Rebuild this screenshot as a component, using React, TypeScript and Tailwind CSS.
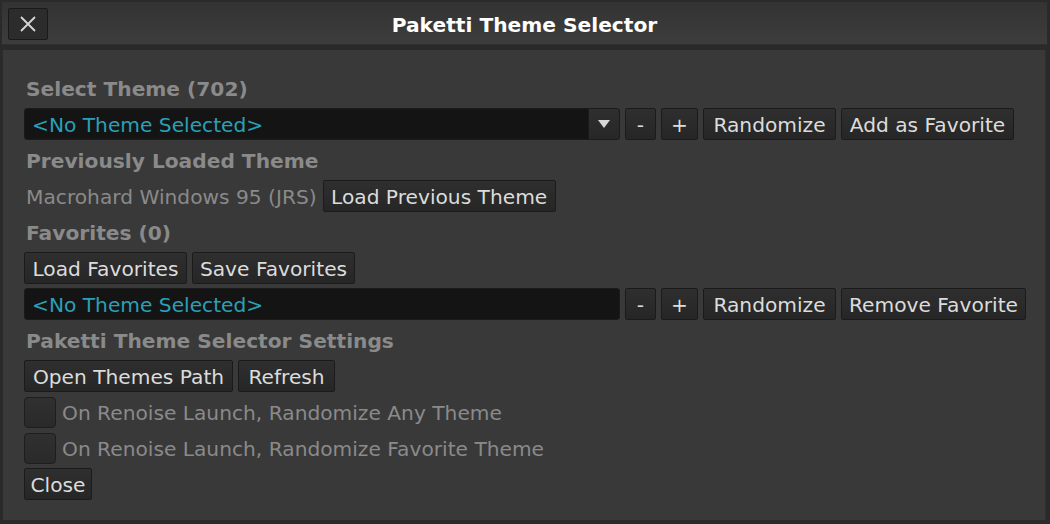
import React from "react";

const font = { fontFamily: '"DejaVu Sans", "Liberation Sans", sans-serif' };

function Btn({ label, w }: { label: string; w: string }) {
  return (
    <button
      className={`${w} h-8 shrink-0 rounded-[2px] border border-[#1b1b1b] bg-gradient-to-b from-[#2f2f2f] to-[#262626] pt-[2px] text-[20.2px] leading-none text-[#dcdcdc] flex items-center justify-center`}
    >
      {label}
    </button>
  );
}

function Heading({ text }: { text: string }) {
  return (
    <div className="h-8 flex items-center pt-[2px] pl-[2px] text-[20.2px] font-bold text-[#8a8a8a]">
      {text}
    </div>
  );
}

function Dropdown({ arrow }: { arrow?: boolean }) {
  return (
    <div className="w-[596px] h-8 shrink-0 rounded-[3px] border border-[#1b1b1b] bg-[#141414] flex items-center overflow-hidden">
      <span className="flex-1 pl-[7px] pt-[2px] text-[20.2px] text-[#2aa0b6]">&lt;No Theme Selected&gt;</span>
      {arrow && (
        <span className="w-[31px] h-full bg-gradient-to-b from-[#2f2f2f] to-[#272727] border-l border-[#1b1b1b] flex items-center justify-center">
          <svg width="14" height="10" viewBox="0 0 14 10">
            <path d="M1 1 L13 1 L7 9 Z" fill="#d8d8d8" />
          </svg>
        </span>
      )}
    </div>
  );
}

function Check({ label }: { label: string }) {
  return (
    <div className="h-8 flex items-center gap-[6px]">
      <span className="w-8 h-[31px] rounded-[4px] border border-[#1e1e1e] bg-gradient-to-b from-[#303030] to-[#2a2a2a]" />
      <span className="pt-[2px] text-[20.2px] text-[#8a8a8a]">{label}</span>
    </div>
  );
}

export default function App() {
  return (
    <div style={font} className="w-[1050px] h-[524px] bg-[#2a2a2a] p-[2px] flex flex-col overflow-hidden">
      <div className="h-[43px] shrink-0 bg-gradient-to-b from-[#333333] to-[#3d3d3d] border-b border-[#2f2f2f] mr-px relative flex items-center justify-center">
        <button className="absolute left-[6px] top-[6px] w-[40px] h-[32px] rounded-[2px] border border-[#1a1a1a] bg-[#2c2c2c] flex items-center justify-center">
          <svg width="18" height="18" viewBox="0 0 18 18">
            <path d="M2 2 L16 16 M16 2 L2 16" stroke="#d6d6d6" strokeWidth="1.8" />
          </svg>
        </button>
        <span className="pt-[4px] text-[20.2px] font-bold text-white">Paketti Theme Selector</span>
      </div>
      <div className="mt-[5px] ml-px mr-[2px] flex-1 bg-[#393939] border-r border-[#2f2f2f] pt-[22px] pl-[21px] flex flex-col gap-1">
        <Heading text="Select Theme (702)" />
        <div className="flex gap-[5px]">
          <Dropdown arrow />
          <Btn label="-" w="w-[31px]" />
          <Btn label="+" w="w-[37px]" />
          <Btn label="Randomize" w="w-[133px]" />
          <Btn label="Add as Favorite" w="w-[173px]" />
        </div>
        <Heading text="Previously Loaded Theme" />
        <div className="flex items-center gap-[6px]">
          <span className="pl-[2px] pt-[2px] text-[20.2px] text-[#8a8a8a]">Macrohard Windows 95 (JRS)</span>
          <Btn label="Load Previous Theme" w="w-[233px]" />
        </div>
        <Heading text="Favorites (0)" />
        <div className="flex gap-[5px]">
          <Btn label="Load Favorites" w="w-[163px]" />
          <Btn label="Save Favorites" w="w-[163px]" />
        </div>
        <div className="flex gap-[5px]">
          <Dropdown />
          <Btn label="-" w="w-[31px]" />
          <Btn label="+" w="w-[37px]" />
          <Btn label="Randomize" w="w-[133px]" />
          <Btn label="Remove Favorite" w="w-[185px]" />
        </div>
        <Heading text="Paketti Theme Selector Settings" />
        <div className="flex gap-[5px]">
          <Btn label="Open Themes Path" w="w-[209px]" />
          <Btn label="Refresh" w="w-[97px]" />
        </div>
        <Check label="On Renoise Launch, Randomize Any Theme" />
        <Check label="On Renoise Launch, Randomize Favorite Theme" />
        <div className="flex">
          <Btn label="Close" w="w-[68px]" />
        </div>
      </div>
      <div className="h-[2px]" />
    </div>
  );
}
